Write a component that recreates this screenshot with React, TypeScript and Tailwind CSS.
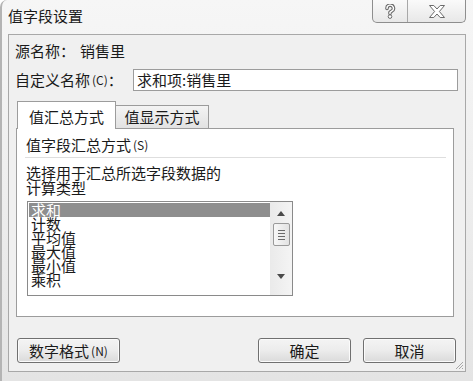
import React from "react";

function HelpIcon() {
  return (
    <svg width="12" height="15" viewBox="0 0 12 15">
      <path d="M3 4.5 A3.2 3.2 0 1 1 7.6 7.2 L6 8.3 V9.6" fill="none" stroke="#6a6a6a" strokeWidth="3.6" strokeLinecap="round" strokeLinejoin="round" />
      <path d="M3 4.5 A3.2 3.2 0 1 1 7.6 7.2 L6 8.3 V9.6" fill="none" stroke="#ffffff" strokeWidth="1.4" strokeLinecap="round" strokeLinejoin="round" />
      <circle cx="6" cy="12.6" r="1.8" fill="#ffffff" stroke="#6a6a6a" strokeWidth="1" />
    </svg>
  );
}

function CloseIcon() {
  return (
    <svg width="16" height="13" viewBox="0 0 16 13">
      <polygon
        points="0.5,0.5 4.8,0.5 8,4 11.2,0.5 15.5,0.5 10.4,6.5 15.5,12.5 11.2,12.5 8,9 4.8,12.5 0.5,12.5 5.6,6.5"
        fill="#ffffff"
        stroke="#6a6a6a"
        strokeWidth="1"
        strokeLinejoin="round"
      />
    </svg>
  );
}

function Grip() {
  return (
    <svg width="10" height="10" viewBox="0 0 10 10" className="absolute right-[1px] bottom-[1px]">
      <line x1="9" y1="2" x2="2" y2="9" stroke="#a8a8a8" strokeWidth="1" />
      <line x1="9" y1="5" x2="5" y2="9" stroke="#a8a8a8" strokeWidth="1" />
      <line x1="9" y1="8" x2="8" y2="9" stroke="#a8a8a8" strokeWidth="1" />
    </svg>
  );
}

function Button({ children, w }: { children: React.ReactNode; w: string }) {
  return (
    <div
      className={`${w} h-[25px] rounded-[3px] border border-[#707070] bg-gradient-to-b from-[#f4f4f4] via-[#ececec] to-[#dadada] flex items-center justify-center text-[15px] leading-[20px] shadow-[inset_0_0_0_1px_#fbfbfb]`}
    >
      {children}
    </div>
  );
}

const items = ["求和", "计数", "平均值", "最大值", "最小值", "乘积"];

export default function App() {
  return (
    <div className="w-[473px] h-[381px] overflow-hidden rounded-tl-[7px] border-l-[2px] border-[#b4b4b4] bg-gradient-to-b from-[#f6f6f6] via-[#eeeeee] to-[#e4e4e4] font-['Noto_Sans_CJK_SC',sans-serif] text-[#1a1a1a] flex flex-col">
      {/* title bar */}
      <div className="h-[34px] flex items-start shrink-0">
        <div className="ml-[6px] mt-[6px] text-[15px] leading-[20px]">值字段设置</div>
        <div className="ml-auto mr-[7px] flex h-[23px] border border-t-0 border-[#8e8e8e] rounded-b-[5px] overflow-hidden bg-gradient-to-b from-[#fafafa] to-[#e8e8e8]">
          <div className="w-[35px] flex items-center justify-center border-r border-[#a8a8a8]">
            <HelpIcon />
          </div>
          <div className="w-[57px] flex items-center justify-center">
            <CloseIcon />
          </div>
        </div>
      </div>

      {/* client area */}
      <div className="relative ml-[6px] mr-[7px] h-[338px] shrink-0 border border-[#a8a8a8] bg-[#f0f0f0] flex flex-col">
        <div className="mt-[6px] ml-[6px] h-[20px] flex text-[15px] leading-[20px]">
          <span className="w-[65px]">源名称：</span>
          <span>销售里</span>
        </div>

        <div className="mt-[8px] flex items-center h-[22px]">
          <div className="ml-[6px] w-[118px] text-[15px] leading-[20px] flex items-center">
            <span>自定义名称</span>
            <span className="text-[12px] ml-[2px]">(C)</span>
            <span>：</span>
          </div>
          <div className="w-[325px] h-[22px] border border-[#9c9c9c] bg-white pl-[3px] text-[15px] leading-[20px]">
            求和项:销售里
          </div>
        </div>

        {/* tabs */}
        <div className="mt-[10px] ml-[7px] flex items-end h-[27px]">
          <div className="relative z-10 ml-[1px] w-[99px] h-[28px] -mb-[1px] border border-b-0 border-[#9c9c9c] bg-white flex justify-center pt-[5px] text-[15px] leading-[20px]">
            值汇总方式
          </div>
          <div className="w-[93px] h-[23px] border border-l-0 border-b-0 border-[#9c9c9c] bg-gradient-to-b from-[#f4f4f4] to-[#e2e2e2] flex items-center justify-center text-[15px] leading-[20px]">
            值显示方式
          </div>
        </div>

        <div className="ml-[7px] w-[438px] h-[189px] border border-[#9c9c9c] bg-white flex flex-col">
          <div className="mt-[6px] pl-[9px] text-[15px] leading-[20px] flex items-center">
            <span>值字段汇总方式</span>
            <span className="text-[12px] ml-[2px]">(S)</span>
          </div>
          <div className="mt-[2px] ml-[8px] w-[421px] h-[1px] bg-[#dedede]" />
          <div className="mt-[7px] pl-[9px] text-[15px] leading-[15px]">
            <div>选择用于汇总所选字段数据的</div>
            <div>计算类型</div>
          </div>

          {/* list box */}
          <div className="mt-[6px] ml-[10px] w-[266px] h-[95px] border border-[#8a8a8a] bg-white flex overflow-hidden">
            <div className="flex-1 pt-[1px] pl-[1px] flex flex-col">
              {items.map((it, i) => (
                <div
                  key={it}
                  className={`h-[14px] leading-[14px] text-[15px] pl-[2px] ${i === 0 ? "bg-[#8e8e8e] text-white" : ""}`}
                >
                  {it}
                </div>
              ))}
            </div>
            <div className="w-[22px] bg-gradient-to-r from-[#eaeaea] to-[#f4f4f4] flex flex-col items-center">
              <svg width="8" height="5" viewBox="0 0 8 5" className="mt-[9px]">
                <polygon points="4,0 8,5 0,5" fill="#4a4a4a" />
              </svg>
              <div className="mt-[7px] w-[17px] h-[23px] rounded-[2px] border border-[#9a9a9a] bg-gradient-to-r from-[#f8f8f8] to-[#e2e2e2] flex flex-col items-center justify-center gap-[2px]">
                <div className="w-[7px] h-[1px] bg-[#6a6a6a]" />
                <div className="w-[7px] h-[1px] bg-[#6a6a6a]" />
                <div className="w-[7px] h-[1px] bg-[#6a6a6a]" />
                <div className="w-[7px] h-[1px] bg-[#6a6a6a]" />
              </div>
              <svg width="8" height="5" viewBox="0 0 8 5" className="mt-[28px]">
                <polygon points="0,0 8,0 4,5" fill="#4a4a4a" />
              </svg>
            </div>
          </div>
        </div>

        {/* buttons */}
        <div className="mt-[21px] flex items-center">
          <div className="ml-[8px]">
            <Button w="w-[103px]">
              <span>数字格式</span>
              <span className="text-[12px] ml-[2px]">(N)</span>
            </Button>
          </div>
          <div className="ml-auto mr-[9px] flex gap-[12px]">
            <Button w="w-[93px]">确定</Button>
            <Button w="w-[93px]">取消</Button>
          </div>
        </div>
        <Grip />
      </div>
    </div>
  );
}
